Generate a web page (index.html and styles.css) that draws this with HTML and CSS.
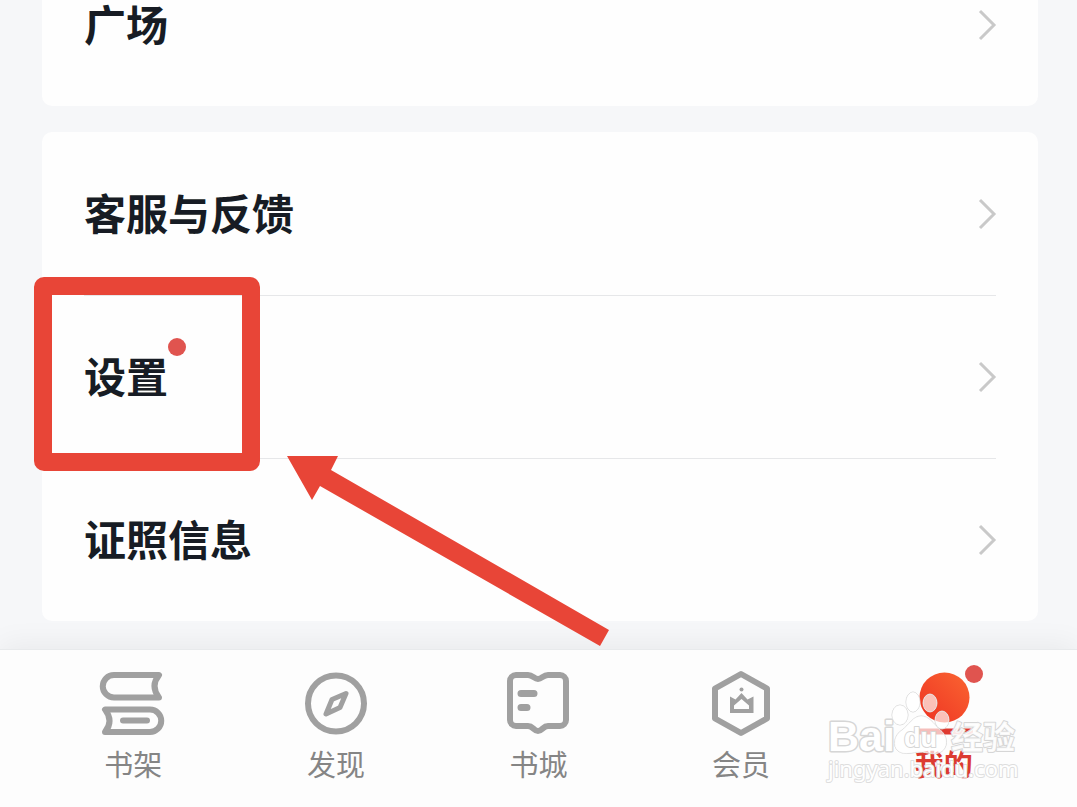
FILE: index.html
```html
<!DOCTYPE html>
<html lang="zh">
<head>
<meta charset="UTF-8">
<meta name="viewport" content="width=device-width,initial-scale=1">
<title>我的</title>
<link rel="stylesheet" href="styles.css">
</head>
<body>
<main class="content">
<section class="card">
<a class="row" href="#square"><span class="row-label">广场</span><svg class="chevron" viewBox="0 0 18 32"><path d="M2 2l14 14L2 30"/></svg></a>
</section>
<section class="card">
<a class="row" href="#feedback"><span class="row-label">客服与反馈</span><svg class="chevron" viewBox="0 0 18 32"><path d="M2 2l14 14L2 30"/></svg></a>
<a class="row marked" href="#settings"><span class="row-label">设置<i class="dot"></i></span><svg class="chevron" viewBox="0 0 18 32"><path d="M2 2l14 14L2 30"/></svg>
<span class="highlight"></span>
<svg class="arrow" viewBox="0 0 322 192"><path d="M0 1H51L44 15 322 175 313 191 33 31 25 45Z"/></svg>
</a>
<a class="row" href="#license"><span class="row-label">证照信息</span><svg class="chevron" viewBox="0 0 18 32"><path d="M2 2l14 14L2 30"/></svg></a>
</section>
</main>

<nav class="tabbar">
<a class="tab" href="#shelf">
<svg class="tab-icon" viewBox="0 0 66 66"><path d="M59 4H14a11 11 0 0 0 0 22.500H59Q50 15 59 4ZM5 38.500H50a11 11 0 0 1 0 22.500H5Q14 50 5 38.500Z"/><path d="M23 49.500H47"/></svg>
<span>书架</span></a>
<a class="tab" href="#discover">
<svg class="tab-icon" viewBox="0 0 66 66"><circle cx="33" cy="32.500" r="28"/><path class="needle" d="M43 22.500L29 28.500 23 43 37 36.500Z"/></svg>
<span>发现</span></a>
<a class="tab" href="#store">
<svg class="tab-icon" viewBox="0 0 66 66"><path d="M11 4H23C28 4 29 8 33 8S38 4 43 4H55a6 6 0 0 1 6 6V49a6 6 0 0 1-6 6H43C38 55 37 60 33 60S28 55 23 55H11a6 6 0 0 1-6-6V10a6 6 0 0 1 6-6Z"/><path class="lines" d="M16 22.500H29M16 36.500H22"/></svg>
<span>书城</span></a>
<a class="tab" href="#vip">
<svg class="tab-icon" viewBox="0 0 66 66"><path d="M33 3L59 17.500V47.500L33 62 7 47.500V17.500Z"/><path class="crown" fill-rule="evenodd" d="M22 25.500L27.500 28.500 33.500 22 39.500 28.500 45.500 25.500V42H22ZM26 38H41V34.500L33.500 28 26 34.500Z"/><circle class="crown" cx="33.500" cy="18.500" r="2"/></svg>
<span>会员</span></a>
<a class="tab active" href="#mine">
<svg class="tab-icon" viewBox="0 0 66 66"><defs><linearGradient id="sun" x1="1" y1="0" x2="0" y2="1"><stop offset="0" stop-color="#fa6531"/><stop offset="1" stop-color="#ee3323"/></linearGradient></defs><circle class="head" cx="33.500" cy="26.500" r="25"/><path class="smile" d="M8 60.500H59"/></svg>
<i class="dot"></i>
<span>我的</span></a>
<svg class="watermark" viewBox="0 0 200 98">
<text class="wm-brand" x="3" y="64">Bai</text>
<g class="wm-paw"><ellipse cx="75" cy="28" rx="8" ry="10"/><ellipse cx="88" cy="15" rx="7" ry="10"/><ellipse cx="105" cy="16" rx="7" ry="9"/><ellipse cx="117" cy="33" rx="7" ry="9"/><path d="M96 29C104 29 109 37 114 42C123 48 124 60 116 65C108 69 102 65 95 65C88 65 80 69 73 64C67 59 69 48 77 43C84 38 88 29 96 29Z"/></g>
<text class="wm-du" x="79" y="60">du</text>
<text class="wm-cn" x="126" y="62">经验</text>
<text class="wm-url" x="3" y="90">jingyan.baidu.com</text>
</svg>
</nav>
</body>
</html>
```
FILE: styles.css
```css
*{box-sizing:border-box}
body{margin:0;height:100vh;display:flex;flex-direction:column;background:#f6f7f9;font-family:"Noto Sans CJK SC",sans-serif;color:#171c24}
a{color:inherit;text-decoration:none}
svg{display:block;overflow:visible}

/* list stays scrolled to its end */
.content{flex:1;min-height:0;overflow:hidden;display:flex;flex-direction:column;justify-content:flex-end;gap:26px;padding:0 39px 28px 42px}
.card{flex:none;background:#fefefe;border-radius:10px;padding:0 42px}
.row{position:relative;display:flex;align-items:center;justify-content:space-between;height:163px}
.row+.row{border-top:1px solid #e6e7e9}
.row.marked{z-index:1}
.row-label{position:relative;padding-bottom:4px;font-size:42px;line-height:60px;font-weight:700}
.chevron{width:18px;height:32px;fill:none;stroke:#c9c9c9;stroke-width:3}
.dot{position:absolute;width:18px;height:18px;border-radius:50%;background:#e0544f}
.row-label .dot{left:84px;top:-7px}

.highlight{position:absolute;left:-50px;top:-19px;width:226px;height:194px;border:18px solid #e84537;border-radius:10px}
.arrow{position:absolute;left:203px;top:159px;width:322px;height:192px;fill:#e84537}

.tabbar{position:relative;display:grid;grid-template-columns:repeat(5,1fr);height:158px;padding:21px 32px 0;background:#fdfdfd;border-top:1px solid #e8eaec;box-shadow:0 -4px 28px rgba(0,0,0,.06)}
.tab{position:relative;display:flex;flex-direction:column;align-items:center;gap:6px;font-size:29px;line-height:40px;color:#858585}
.tab-icon{width:66px;height:66px;fill:none;stroke:#a0a0a0;stroke-width:6;stroke-linejoin:round;stroke-linecap:round}
.tab-icon .lines{stroke-width:7}
.tab-icon .needle{stroke-width:5}
.tab-icon .crown{fill:#a0a0a0;stroke:none}
.tab-icon .head{fill:url(#sun);stroke:none}
.tab-icon .smile{stroke:#df3a30}
.active{color:#dc3b31;font-weight:700}
.tab .dot{left:calc(50% + 21px);top:-6px}

.watermark{position:absolute;right:52px;bottom:22px;width:200px;height:98px;fill:#fff;stroke:#d6d6d6;stroke-width:2;stroke-linejoin:round;paint-order:stroke;pointer-events:none}
.wm-paw{fill:rgba(255,255,255,.68);stroke-width:1}
.wm-brand{font:700 43px "Liberation Sans",sans-serif;stroke-width:3}
.wm-du{font:700 27px "Liberation Sans",sans-serif}
.wm-cn{font:700 32px "Noto Sans CJK SC",sans-serif;fill:rgba(255,255,255,.9)}
.wm-url{font:400 22px "Noto Sans",sans-serif;stroke:#dedede}
```
